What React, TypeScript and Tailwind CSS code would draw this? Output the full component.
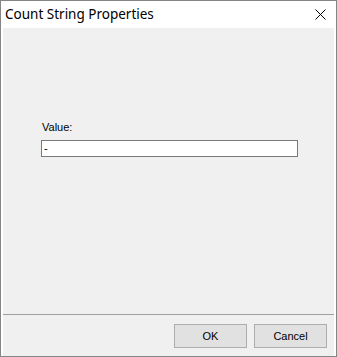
import React from 'react';

export default function App() {
  return (
    <div className="w-[337px] h-[357px] border border-[#858585] bg-white flex flex-col font-['Liberation_Sans',Arial,sans-serif] text-black">
      {/* Title bar */}
      <div className="h-[27px] shrink-0 flex items-center justify-between pl-[4px] pr-[10px]">
        <span className="font-['Noto_Sans',sans-serif] text-[13.5px] leading-none">Count String Properties</span>
        <svg width="11" height="11" viewBox="0 0 11 11" className="text-black">
          <path d="M0.5 0.5 L10.5 10.5 M10.5 0.5 L0.5 10.5" stroke="currentColor" strokeWidth="1" />
        </svg>
      </div>

      {/* Client area */}
      <div className="flex-1 mx-[2px] bg-[#f0f0f0] flex flex-col">
        <div className="flex-1 flex flex-col pt-[93px] pl-[38px] pr-[36px]">
          <span className="text-[11px] leading-[13px] pl-[1px]">Value:</span>
          <div className="mt-[6px] h-[17px] bg-white border border-[#7a7a7a] flex items-center px-[2px] text-[11px] leading-none">
            -
          </div>
        </div>
        <div className="h-[42px] shrink-0 border-t border-[#a0a0a0] flex justify-end items-start pt-[9px] pr-[7px] gap-[7px]">
          <button className="w-[73px] h-[24px] bg-[#e1e1e1] border border-[#adadad] text-[11px] leading-none">OK</button>
          <button className="w-[73px] h-[24px] bg-[#e1e1e1] border border-[#adadad] text-[11px] leading-none">Cancel</button>
        </div>
      </div>
    </div>
  );
}
